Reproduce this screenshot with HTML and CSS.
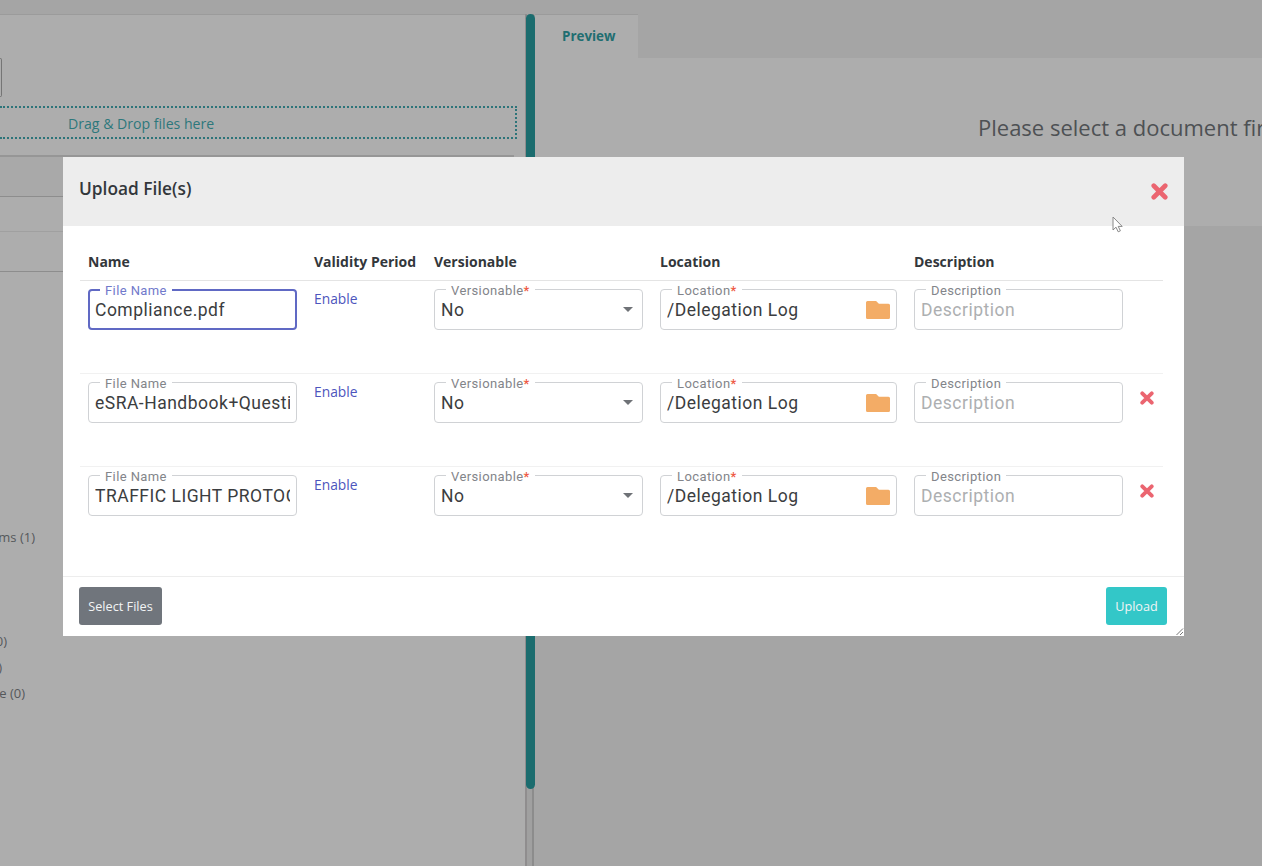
FILE: index.html
```html
<!DOCTYPE html>
<html lang="en">
<head>
    <meta charset="UTF-8">
    <meta name="viewport" content="width=device-width, initial-scale=1.0">
    <title>Upload File(s)</title>
    <link rel="stylesheet" href="styles.css">
</head>
<body>
    <svg class="sprite" width="0" height="0">
        <symbol id="cross" viewBox="0 0 16 16">
            <path d="M2.6 2.6 L13.4 13.4 M13.4 2.6 L2.6 13.4" fill="none" stroke="#eb6570" stroke-width="4.4" stroke-linecap="round"/>
        </symbol>
        <symbol id="folder" viewBox="0 0 24 18">
            <path d="M1.5 0h8.6L12.9 2.8H22.5a1.5 1.5 0 0 1 1.5 1.5V16.5a1.5 1.5 0 0 1-1.5 1.5H1.5a1.5 1.5 0 0 1-1.5-1.5V1.5a1.5 1.5 0 0 1 1.5-1.5z" fill="#f3ac66"/>
        </symbol>
        <symbol id="caret" viewBox="0 0 10 5">
            <path d="M0 0h10L5 5z" fill="#6f7277"/>
        </symbol>
    </svg>

    <div class="page">
        <aside class="left-pane">
            <div class="search-box"></div>
            <div class="drop-zone"><span>Drag &amp; Drop files here</span></div>
            <div class="file-list">
                <div class="list-row head"></div>
                <div class="list-row light"></div>
                <div class="list-row"></div>
            </div>
            <div class="tree">
                <div class="tree-item ms">ms (1)</div>
                <div class="tree-item zero">0)</div>
                <div class="tree-item end">)</div>
                <div class="tree-item last">e (0)</div>
            </div>
        </aside>
        <div class="splitter"><div class="thumb"></div></div>
        <main class="right-pane">
            <div class="tabs"><div class="tab">Preview</div></div>
            <div class="preview">Please select a document first</div>
        </main>
    </div>

    <div class="modal">
        <div class="modal-header">
            <h2>Upload File(s)</h2>
            <svg class="close"><use href="#cross"/></svg>
        </div>
        <div class="modal-body">
            <div class="row row-head">
                <div>Name</div>
                <div>Validity Period</div>
                <div>Versionable</div>
                <div>Location</div>
                <div>Description</div>
                <div></div>
            </div>
            <div class="row first">
                <div><div class="field focused"><label>File Name</label><span class="value">Compliance.pdf</span></div></div>
                <div><a class="enable">Enable</a></div>
                <div><div class="field"><label>Versionable<b>*</b></label><span class="value">No</span><svg class="caret"><use href="#caret"/></svg></div></div>
                <div><div class="field"><label>Location<b>*</b></label><span class="value">/Delegation Log</span><svg class="folder"><use href="#folder"/></svg></div></div>
                <div><div class="field"><label>Description</label><span class="value placeholder">Description</span></div></div>
                <div></div>
            </div>
            <div class="row">
                <div><div class="field"><label>File Name</label><span class="value">eSRA-Handbook+Questionnaire</span></div></div>
                <div><a class="enable">Enable</a></div>
                <div><div class="field"><label>Versionable<b>*</b></label><span class="value">No</span><svg class="caret"><use href="#caret"/></svg></div></div>
                <div><div class="field"><label>Location<b>*</b></label><span class="value">/Delegation Log</span><svg class="folder"><use href="#folder"/></svg></div></div>
                <div><div class="field"><label>Description</label><span class="value placeholder">Description</span></div></div>
                <div><svg class="remove"><use href="#cross"/></svg></div>
            </div>
            <div class="row">
                <div><div class="field"><label>File Name</label><span class="value">TRAFFIC LIGHT PROTOCOL</span></div></div>
                <div><a class="enable">Enable</a></div>
                <div><div class="field"><label>Versionable<b>*</b></label><span class="value">No</span><svg class="caret"><use href="#caret"/></svg></div></div>
                <div><div class="field"><label>Location<b>*</b></label><span class="value">/Delegation Log</span><svg class="folder"><use href="#folder"/></svg></div></div>
                <div><div class="field"><label>Description</label><span class="value placeholder">Description</span></div></div>
                <div><svg class="remove"><use href="#cross"/></svg></div>
            </div>
        </div>
        <div class="modal-footer">
            <button class="btn btn-select">Select Files</button>
            <button class="btn btn-upload">Upload</button>
        </div>
        <svg class="resizer" viewBox="0 0 8 8"><path d="M0.5 7L7 0.5M4 7L7 4" stroke="#777" fill="none"/></svg>
    </div>

    <svg class="cursor" viewBox="0 0 11 17"><path d="M1 1v13l3-2.8 2.2 4.6 2.2-1-2.2-4.4h4z" fill="#fff" stroke="#888" stroke-width="1"/></svg>
</body>
</html>
```
FILE: styles.css
```css
* {
    box-sizing: border-box;
}

body {
    margin: 0;
    height: 866px;
    overflow: hidden;
    background: #a5a5a5;
    font-family: 'Open Sans', sans-serif;
    color: #33373b;
}

.sprite {
    position: absolute;
}

.page {
    display: flex;
    height: 866px;
    padding-top: 14px;
}

.left-pane {
    width: 525px;
    background: #adadad;
    border-top: 1px solid #9b9b9b;
    overflow: hidden;
}

.search-box {
    width: 2px;
    height: 39px;
    margin-top: 43px;
    border: 1px solid #757575;
    border-left: none;
    border-radius: 0 3px 3px 0;
}

.drop-zone {
    width: 517px;
    height: 33px;
    margin-top: 9px;
    padding-left: 68px;
    border: 2px dotted #2c7479;
    border-left: none;
    font-size: 14.1px;
    line-height: 32px;
    color: #2d787c;
}

.file-list {
    width: 514px;
    margin-top: 16px;
    border-top: 2px solid #969696;
}

.list-row {
    height: 40px;
    border-bottom: 1px solid #8d8d8d;
}

.list-row.head {
    background: #a9a9a9;
}

.list-row.light {
    height: 35px;
    border-bottom-color: #a0a0a0;
}

.tree {
    margin-top: 252px;
    font-size: 13px;
    color: #55585b;
}

.tree-item {
    display: flex;
    justify-content: flex-end;
    height: 26px;
    line-height: 26px;
    white-space: nowrap;
}

.tree-item.ms {
    width: 35px;
    margin-bottom: 78px;
}

.tree-item.zero {
    width: 7px;
}

.tree-item.end {
    width: 2px;
}

.tree-item.last {
    width: 25px;
}

.splitter {
    width: 10px;
    background: linear-gradient(to right, #8f8d8e 2px, #a0a0a0 2px 7px, #8c8c8c 7px 9px, #a5a5a5 9px);
}

.thumb {
    width: 9px;
    height: 775px;
    margin-left: 0.5px;
    border-radius: 5px;
    background: #1b6c6e;
}

.right-pane {
    flex: 1;
    min-width: 0;
}

.tabs {
    height: 44px;
}

.tab {
    width: 103px;
    height: 44px;
    padding-left: 27px;
    background: #adadad;
    border-top: 1px solid #9b9b9b;
    font-size: 13.4px;
    font-weight: 700;
    line-height: 43px;
    color: #1f6e71;
}

.preview {
    height: 168px;
    padding: 53px 0 0 443px;
    background: #adadad;
    font-size: 22px;
    line-height: 32px;
    color: #4e5154;
    white-space: nowrap;
    overflow: hidden;
}

.modal {
    position: absolute;
    left: 63px;
    top: 157px;
    display: flex;
    flex-direction: column;
    width: 1121px;
    height: 479px;
    background: #fff;
}

.modal-header {
    display: flex;
    justify-content: space-between;
    height: 69px;
    padding: 19px 16px 0 16px;
    background: #ededed;
}

.modal-header h2 {
    margin: 0;
    font-size: 17.3px;
    font-weight: 600;
    line-height: 26px;
}

.close {
    width: 17px;
    height: 17px;
    margin-top: 7px;
}

.modal-body {
    flex: 1;
    padding: 19px 21px 0 17px;
}

.row {
    display: grid;
    grid-template-columns: 226px 120px 226px 254px 225px 32px;
    height: 93px;
    padding-top: 8px;
    border-top: 1px solid #f1f1f1;
}

.row > div {
    padding: 0 9px 0 8px;
}

.row > div:nth-child(5) {
    padding-right: 8px;
}

.row-head {
    height: 35px;
    padding-top: 7px;
    border-top: none;
    font-size: 14px;
    font-weight: 700;
    line-height: 19px;
    white-space: nowrap;
}

.row.first {
    border-top-color: #e4e4e4;
}

.field {
    position: relative;
    display: flex;
    align-items: center;
    width: 100%;
    height: 41px;
    padding: 0 6px;
    border: 1px solid #d0d2d5;
    border-radius: 4px;
    font-family: Roboto, sans-serif;
}

.field.focused {
    padding: 0 5px;
    border: 2px solid #6069c4;
}

.field label {
    position: absolute;
    left: 11px;
    top: -7px;
    padding: 0 5px;
    background: #fff;
    font-size: 13px;
    line-height: 16px;
    letter-spacing: 0.4px;
    color: #83858a;
    white-space: nowrap;
}

.field.focused label {
    left: 10px;
    top: -8px;
    color: #7179cb;
}

.field label b {
    font-weight: 500;
    color: #ee5a45;
}

.value {
    flex: 1;
    overflow: hidden;
    font-size: 17.5px;
    line-height: 24px;
    letter-spacing: 0.5px;
    color: #3b3d40;
    white-space: nowrap;
}

.value.placeholder {
    color: #adafb1;
}

.caret {
    width: 10px;
    height: 5px;
    margin-right: 3px;
}

.folder {
    width: 24px;
    height: 18px;
}

.enable {
    display: block;
    font-size: 13.8px;
    font-weight: 500;
    line-height: 20px;
    color: #4d55bd;
}

.remove {
    display: block;
    width: 14px;
    height: 14px;
    margin-top: 9px;
    margin-left: 1px;
}

.modal-footer {
    display: flex;
    justify-content: space-between;
    align-items: flex-start;
    height: 60px;
    padding: 10px 17px 0 16px;
    border-top: 1px solid #ededed;
}

.btn {
    height: 38px;
    padding: 0;
    border: none;
    border-radius: 3px;
    font-family: 'Open Sans', sans-serif;
    font-size: 12.7px;
    color: #f2f4f5;
}

.btn-select {
    width: 83px;
    background: #70757c;
}

.btn-upload {
    width: 61px;
    background: #33c7c8;
}

.resizer {
    position: absolute;
    right: 0;
    bottom: 0;
    width: 8px;
    height: 8px;
}

.cursor {
    position: absolute;
    left: 1112px;
    top: 216px;
    width: 11px;
    height: 17px;
}
```
